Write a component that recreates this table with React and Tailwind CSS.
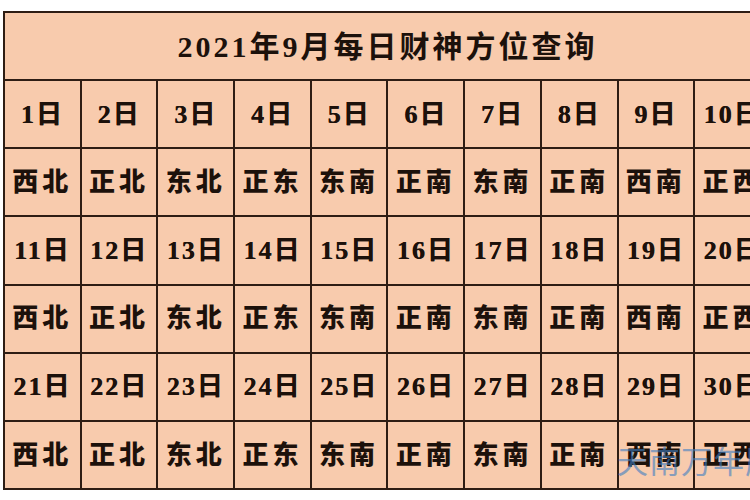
import React from 'react';

// 2021年9月每日财神方位查询 table
const days = [
  ['1日', '2日', '3日', '4日', '5日', '6日', '7日', '8日', '9日', '10日'],
  ['11日', '12日', '13日', '14日', '15日', '16日', '17日', '18日', '19日', '20日'],
  ['21日', '22日', '23日', '24日', '25日', '26日', '27日', '28日', '29日', '30日'],
];

const dirs = ['西北', '正北', '东北', '正东', '东南', '正南', '东南', '正南', '西南', '正西'];

const font = { fontFamily: '"Liberation Serif", "Noto Sans CJK SC", serif' };

export default function App() {
  return (
    <div className="relative h-[500px] w-[750px] overflow-hidden bg-white" style={font}>
      <div className="pl-[3px] pt-[11px]">
        <table className="w-[769px] table-fixed border-collapse bg-[#f8cbad] text-[#1c110b]">
          <tbody>
            <tr className="h-[68px]">
              <td colSpan={10} className="border-2 border-[#2e1d14] text-center text-[30px] font-bold tracking-[3px]">
                2021年9月每日财神方位查询
              </td>
            </tr>
            {days.map((row, i) => (
              <React.Fragment key={i}>
                <tr className="h-[68.2px]">
                  {row.map((d) => (
                    <td key={d} className="border-2 border-[#2e1d14] text-center text-[26px] font-bold tracking-[2px] whitespace-nowrap [text-shadow:0.4px_0_0_#1c110b]">
                      {d}
                    </td>
                  ))}
                </tr>
                <tr className="h-[68.2px]">
                  {dirs.map((d, j) => (
                    <td key={j} className="border-2 border-[#2e1d14] text-center text-[26px] font-black tracking-[4px] whitespace-nowrap">
                      {d}
                    </td>
                  ))}
                </tr>
              </React.Fragment>
            ))}
          </tbody>
        </table>
      </div>

      {/* watermark */}
      <div
        className="absolute left-[617px] top-[437px] whitespace-nowrap text-[31px] tracking-[1px] text-[#3f7fc4] opacity-60"
        style={{ fontFamily: '"Noto Sans CJK SC", sans-serif' }}
      >
        天南万年历
      </div>
    </div>
  );
}
